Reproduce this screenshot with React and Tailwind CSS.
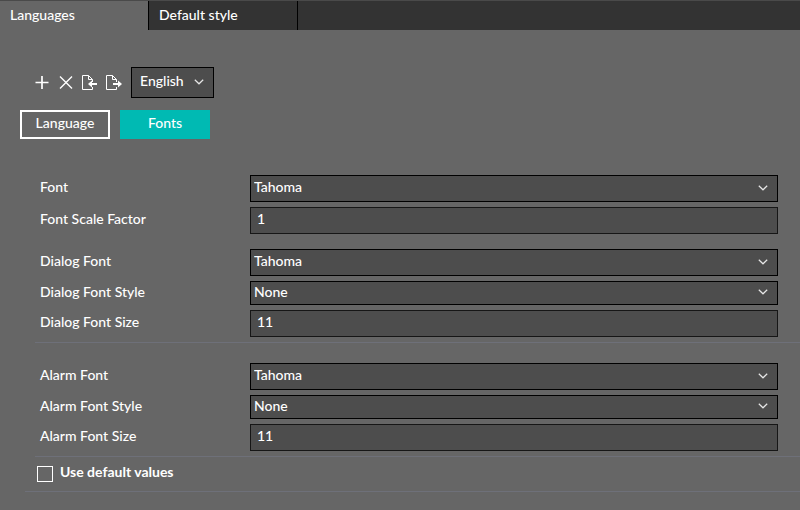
import { useState } from "react";

const fontNames = ["Tahoma", "Arial", "Verdana"];
const fontStyles = ["None", "Bold", "Italic"];

function Chevron() {
  return (
    <span className="pointer-events-none absolute inset-y-0 right-2.5 flex items-center pb-0.5">
      <svg width="10" height="6" viewBox="0 0 10 6" fill="none" stroke="#e6e6e6" strokeWidth="1.2" aria-hidden="true">
        <path d="M0.8 0.8 L5 4.8 L9.2 0.8" />
      </svg>
    </span>
  );
}

function SelectField({ id, label, options, compact }) {
  return (
    <div className="flex items-center">
      <label className="w-[210px] shrink-0 pb-[3px]" htmlFor={id}>{label}</label>
      <div className="relative flex-1">
        <select
          id={id}
          className={`block w-full appearance-none border border-black bg-[#4d4d4d] pl-[3px] pr-8 outline-none ${compact ? "h-6 pb-0.5" : "h-[27px] pb-1"}`}
        >
          {options.map((option) => <option key={option}>{option}</option>)}
        </select>
        <Chevron />
      </div>
    </div>
  );
}

function TextField({ id, label, initial }) {
  const [value, setValue] = useState(initial);

  return (
    <div className="flex items-center">
      <label className="w-[210px] shrink-0 pb-[3px]" htmlFor={id}>{label}</label>
      <input
        id={id}
        className="h-[27px] min-w-0 flex-1 border border-[#161616] bg-[#4d4d4d] pb-1 pl-1.5 outline-none"
        type="text"
        value={value}
        onChange={(event) => setValue(event.target.value)}
      />
    </div>
  );
}

function FileIcon({ children }) {
  return (
    <svg width="16" height="16" viewBox="0 0 16 16" fill="none" stroke="white" aria-hidden="true">
      <path d="M10.5 12 V14.5 H0.5 V0.5 H6.5 L10.5 4.5 V7" strokeWidth="1" />
      <path d="M6.5 0.5 V4.5 H10.5" strokeWidth="1" />
      {children}
    </svg>
  );
}

export default function App() {
  const [useDefaults, setUseDefaults] = useState(false);

  return (
    <div className="min-h-screen bg-[#666] font-['Lato',sans-serif] text-sm font-medium text-white">
      <nav className="flex h-[30px] border-t border-[#4a4a4a] bg-[#333]">
        <button className="w-[148px] bg-[#666] pb-0.5 pl-2.5 text-left" type="button">Languages</button>
        <button className="w-[150px] border-x border-black pb-0.5 pl-2.5 text-left" type="button">Default style</button>
      </nav>

      <div className="flex items-center gap-2 pl-[34px] pt-[37px]">
        <button type="button" aria-label="Add language">
          <svg width="16" height="16" viewBox="0 0 16 16" stroke="white" strokeWidth="1.7" aria-hidden="true">
            <path d="M8 1 V14 M1.5 7.5 H14.5" />
          </svg>
        </button>
        <button type="button" aria-label="Delete language">
          <svg width="16" height="16" viewBox="0 0 16 16" stroke="white" strokeWidth="1.4" aria-hidden="true">
            <path d="M2 1.5 L14 13.5 M14 1.5 L2 13.5" />
          </svg>
        </button>
        <button type="button" aria-label="Import">
          <FileIcon>
            <path d="M15 9 H9" strokeWidth="2" />
            <path d="M6 9 L10 5.5 V12.5 Z" fill="white" stroke="none" />
          </FileIcon>
        </button>
        <button type="button" aria-label="Export">
          <FileIcon>
            <path d="M7 9 H12" strokeWidth="2" />
            <path d="M16 9 L12 5.5 V12.5 Z" fill="white" stroke="none" />
          </FileIcon>
        </button>
        <div className="relative ml-px">
          <select className="block h-[31px] w-[83px] appearance-none border border-black bg-[#4d4d4d] pb-1 pl-2 outline-none" aria-label="Language">
            <option>English</option>
            <option>German</option>
          </select>
          <Chevron />
        </div>
      </div>

      <div className="mt-3 flex gap-2.5 pl-5">
        <button className="h-[29px] w-[90px] border-2 border-white pb-1" type="button">Language</button>
        <button className="h-[29px] w-[90px] bg-[#00bab3] pb-1" type="button">Fonts</button>
      </div>

      <form className="mt-9">
        <div className="space-y-[5px] pl-10 pr-[22px]">
          <SelectField id="font" label="Font" options={fontNames} />
          <TextField id="scale" label="Font Scale Factor" initial="1" />
        </div>
        <div className="mt-[15px] space-y-[5px] pl-10 pr-[22px]">
          <SelectField id="dialog-font" label="Dialog Font" options={fontNames} />
          <SelectField id="dialog-style" label="Dialog Font Style" options={fontStyles} compact />
          <TextField id="dialog-size" label="Dialog Font Size" initial="11" />
        </div>
        <hr className="ml-[35px] mt-[5px] border-[#6e7079]" />
        <div className="mt-5 space-y-[5px] pl-10 pr-[22px]">
          <SelectField id="alarm-font" label="Alarm Font" options={fontNames} />
          <SelectField id="alarm-style" label="Alarm Font Style" options={fontStyles} compact />
          <TextField id="alarm-size" label="Alarm Font Size" initial="11" />
        </div>
        <hr className="ml-[35px] mt-[5px] border-[#6e7079]" />
        <div className="flex h-[34px] items-center gap-[7px] pl-[37px]">
          <input
            id="use-defaults"
            className="size-4 appearance-none border border-white checked:bg-[#00bab3]"
            type="checkbox"
            checked={useDefaults}
            onChange={(event) => setUseDefaults(event.target.checked)}
          />
          <label className="pb-1 font-bold" htmlFor="use-defaults">Use default values</label>
        </div>
        <hr className="ml-[25px] border-[#6e7079]" />
      </form>
    </div>
  );
}
